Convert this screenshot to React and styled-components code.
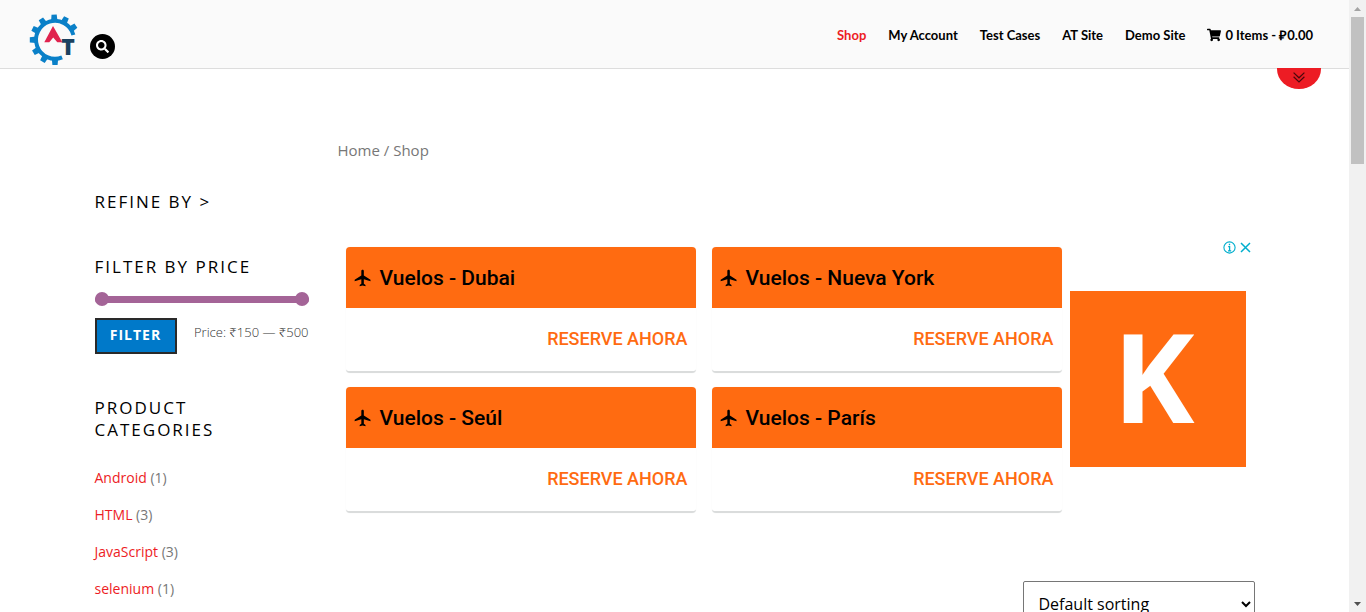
import React from "react";
import styled, { createGlobalStyle } from "styled-components";
import { FaSearch, FaShoppingCart } from "react-icons/fa";
import { MdFlight } from "react-icons/md";

const GlobalStyle = createGlobalStyle`
  *, *::before, *::after { box-sizing: border-box; }
  body {
    margin: 0;
    background: #fff;
    color: #777;
    font-family: "Open Sans", "Noto Sans", sans-serif;
    font-size: 14px;
    line-height: 22px;
  }
  a { color: inherit; text-decoration: none; }
`;

const Shell = styled.div`
  display: flex;
  height: 100vh;
  overflow: hidden;
`;

const Page = styled.div`
  flex: 1;
  min-width: 0;
  overflow: hidden;
`;

const Header = styled.header`
  position: relative;
  display: flex;
  justify-content: space-between;
  padding: 0 36px 0 29px;
  height: 69px;
  background: #fafafa;
  border-bottom: 1px solid #ddd;
`;

const Brand = styled.div`
  display: flex;
  align-items: flex-start;
  gap: 11px;
  padding-top: 14px;
`;

const LogoLink = styled.a`
  display: block;
  height: 52px;
`;

const SearchButton = styled.button`
  display: flex;
  align-items: center;
  justify-content: center;
  width: 25px;
  height: 25px;
  margin-top: 20px;
  padding: 0;
  border: 0;
  border-radius: 50%;
  background: #000;
  color: #fff;
  font-size: 13px;
`;

const Nav = styled.nav`
  display: flex;
  gap: 22px;
  padding-top: 24px;
  font-family: Lato, "Open Sans", sans-serif;
  font-size: 13px;
  font-weight: 700;
`;

const NavLink = styled.a`
  display: flex;
  align-items: center;
  gap: 4px;
  height: 22px;
  white-space: nowrap;
  color: ${(p) => (p.$active ? "#ed1c24" : "#000")};
`;

const HeaderTab = styled.button`
  position: absolute;
  top: 68px;
  right: 28px;
  display: flex;
  justify-content: center;
  width: 44px;
  height: 21px;
  padding: 4px 0 0;
  border: 0;
  border-radius: 0 0 22px 22px / 0 0 20px 20px;
  background: #ed1c24;
`;

const Container = styled.div`
  display: flex;
  gap: 29px;
  max-width: 1160px;
  margin: 0 auto;
`;

const Sidebar = styled.aside`
  width: 214px;
  flex: none;
  padding-top: 122px;
`;

const Heading = styled.h2`
  margin: 0 0 ${(p) => p.$gap}px;
  max-width: 180px;
  color: #000;
  font-size: 17px;
  font-weight: 500;
  line-height: 22px;
  letter-spacing: 2px;
  text-transform: uppercase;
`;

const PriceRange = styled.div`
  position: relative;
  height: 14px;
  display: flex;
  align-items: center;
  margin-bottom: 12px;

  &::before {
    content: "";
    width: 100%;
    height: 7px;
    border-radius: 7px;
    background: #a46497;
  }
`;

const RangeInput = styled.input`
  position: absolute;
  inset: 0;
  width: 100%;
  height: 14px;
  margin: 0;
  appearance: none;
  background: transparent;
  pointer-events: none;

  &::-webkit-slider-thumb {
    appearance: none;
    width: 14px;
    height: 14px;
    border: 0;
    border-radius: 50%;
    background: #a46497;
    pointer-events: auto;
  }
`;

const FilterRow = styled.div`
  display: flex;
  justify-content: space-between;
  margin-bottom: 43px;
  font-size: 13px;
`;

const FilterButton = styled.button`
  width: 82px;
  height: 36px;
  padding: 0 0 2px;
  border: 2px solid #2a2a2a;
  background: #0079c9;
  color: #fff;
  font: 700 14px/30px "Open Sans", sans-serif;
  letter-spacing: 1px;
`;

const PriceText = styled.span`
  color: #333;
  font-weight: 300;
  line-height: 28px;
`;

const Categories = styled.ul`
  display: grid;
  gap: 13px;
  margin: 0;
  padding: 0;
  list-style: none;
  line-height: 24px;

  a { color: #ed1c24; }
`;

const Main = styled.main`
  flex: 1;
  min-width: 0;
  padding-top: 69px;
`;

const Breadcrumb = styled.nav`
  margin-bottom: 77px;
  font-size: 15px;
  line-height: 24px;
`;

const Ad = styled.section`
  position: relative;
  display: flex;
  align-items: flex-start;
  gap: 8px;
  padding: 8px 9px 8px 8px;
  font-family: Roboto, sans-serif;
`;

const Offers = styled.div`
  flex: 1;
  display: grid;
  grid-template-columns: 1fr 1fr;
  gap: 14px 16px;
`;

const Offer = styled.a`
  display: block;
  overflow: hidden;
  border-radius: 4px;
  border-bottom: 2px solid #dadcdc;
  box-shadow: 0 0 1px rgba(0, 0, 0, 0.1);
`;

const OfferTitle = styled.span`
  display: flex;
  align-items: center;
  gap: 7px;
  height: 61px;
  padding: 0 7px;
  background: #ff6b11;
  color: #000;
  font-size: 21px;
  font-weight: 500;
`;

const OfferAction = styled.span`
  display: block;
  height: 63px;
  padding: 0 8px;
  color: #ff6b11;
  font-size: 18px;
  font-weight: 500;
  line-height: 62px;
  text-align: right;
`;

const AdLogo = styled.a`
  display: flex;
  align-items: center;
  justify-content: center;
  width: 176px;
  height: 176px;
  margin-top: 44px;
  padding: 0 8px 6px 0;
  background: #ff6b11;
  color: #fff;
  font: 700 123px/160px "Open Sans", sans-serif;
`;

const AdChoices = styled.div`
  position: absolute;
  top: 2px;
  right: 3px;
  display: flex;
  gap: 3px;

  button {
    display: block;
    height: 13px;
    padding: 0;
    border: 0;
    background: none;
  }
`;

const SortRow = styled.form`
  display: flex;
  justify-content: flex-end;
  margin-top: 60px;
`;

const SortSelect = styled.select`
  width: 232px;
  height: 46px;
  padding: 0 11px;
  border: 1px solid #767676;
  border-radius: 2px;
  background: #fff;
  color: #000;
  font: 400 16px "Open Sans", sans-serif;
`;

const Scrollbar = styled.div`
  display: flex;
  flex-direction: column;
  align-items: center;
  justify-content: space-between;
  width: 17px;
  flex: none;
  background: #f1f1f1;
`;

const ScrollUpper = styled.div`
  display: flex;
  flex-direction: column;
`;

const ScrollArrow = styled.svg`
  display: block;
  width: 13px;
  height: 17px;
  fill: ${(p) => (p.$enabled ? "#505050" : "#a3a3a3")};
`;

const ScrollThumb = styled.div`
  width: 13px;
  height: 147px;
  background: #c1c1c1;
`;

const teeth = [-2, 27, 56, -34, -63, -90, -121, -150, 180];

function Logo() {
  return (
    <svg width="50" height="52" viewBox="29 14 50 52" role="img" aria-label="Automation Testing">
      <path
        d="M62.1 57.4 A19 19 0 1 1 73.4 34.9"
        fill="none"
        stroke="#0a80c8"
        strokeWidth="4"
      />
      {teeth.map((angle) => (
        <path
          key={angle}
          d="M51.8 21 L52.4 14.6 H57.6 L58.2 21 Z"
          fill="#0a80c8"
          transform={`rotate(${angle} 55 39.8)`}
        />
      ))}
      <path d="M53 26 L62.3 42.3 H57.3 L53.2 37.5 L49.3 42.3 H44.3 Z" fill="#e0234e" />
      <text
        x="68"
        y="55"
        textAnchor="middle"
        fill="#1c4260"
        fontFamily="Open Sans, sans-serif"
        fontWeight="800"
        fontSize="23"
      >
        T
      </text>
    </svg>
  );
}

const navItems = ["Shop", "My Account", "Test Cases", "AT Site", "Demo Site"];
const offers = ["Dubai", "Nueva York", "Seúl", "París"];
const categories = [
  ["Android", 1],
  ["HTML", 3],
  ["JavaScript", 3],
  ["selenium", 1],
];

export default function App() {
  return (
    <Shell>
      <GlobalStyle />
      <Page>
        <Header>
          <Brand>
            <LogoLink href="#home"><Logo /></LogoLink>
            <SearchButton type="button" aria-label="Search"><FaSearch /></SearchButton>
          </Brand>
          <Nav>
            {navItems.map((item) => (
              <NavLink key={item} href="#" $active={item === "Shop"}>{item}</NavLink>
            ))}
            <NavLink href="#cart"><FaShoppingCart size={14} />0 Items - ₽0.00</NavLink>
          </Nav>
          <HeaderTab type="button" aria-label="Expand header">
            <svg width="12" height="11" viewBox="0 0 12 11" fill="none" stroke="#4a090c" strokeWidth="1.2">
              <path d="M0.6 0.6 L6 5.8 L11.4 0.6 M0.6 4.8 L6 10 L11.4 4.8" />
            </svg>
          </HeaderTab>
        </Header>

        <Container>
          <Sidebar>
            <Heading $gap={43}>Refine by &gt;</Heading>
            <Heading $gap={14}>Filter by price</Heading>
            <PriceRange>
              <RangeInput type="range" min="150" max="500" defaultValue="150" aria-label="Minimum price" />
              <RangeInput type="range" min="150" max="500" defaultValue="500" aria-label="Maximum price" />
            </PriceRange>
            <FilterRow>
              <FilterButton type="button">FILTER</FilterButton>
              <PriceText>Price: ₹150 — ₹500</PriceText>
            </FilterRow>
            <Heading $gap={25}>Product Categories</Heading>
            <Categories>
              {categories.map(([name, count]) => (
                <li key={name}><a href="#">{name}</a> ({count})</li>
              ))}
            </Categories>
          </Sidebar>

          <Main>
            <Breadcrumb aria-label="Breadcrumb"><a href="#home">Home</a> / Shop</Breadcrumb>
            <Ad>
              <Offers>
                {offers.map((city) => (
                  <Offer key={city} href="#">
                    <OfferTitle><MdFlight size={20} />Vuelos - {city}</OfferTitle>
                    <OfferAction>RESERVE AHORA</OfferAction>
                  </Offer>
                ))}
              </Offers>
              <AdLogo href="#">K</AdLogo>
              <AdChoices>
                <button type="button" aria-label="Ad information">
                  <svg width="13" height="13" viewBox="0 0 13 13" fill="none" stroke="#00aecd">
                    <circle cx="6.5" cy="6.5" r="5.6" strokeWidth="1.1" />
                    <path d="M6.5 2.8 V4.3 M5.2 5.6 H6.6 V9.8 M5 9.8 H8.2" strokeWidth="1.3" />
                  </svg>
                </button>
                <button type="button" aria-label="Close ad">
                  <svg width="13" height="13" viewBox="0 0 13 13" stroke="#00aecd" strokeWidth="1.5">
                    <path d="M2 2 L11 11 M11 2 L2 11" />
                  </svg>
                </button>
              </AdChoices>
            </Ad>
            <SortRow>
              <SortSelect aria-label="Shop order" defaultValue="default">
                <option value="default">Default sorting</option>
                <option value="popularity">Sort by popularity</option>
              </SortSelect>
            </SortRow>
          </Main>
        </Container>
      </Page>
      <Scrollbar aria-hidden="true">
        <ScrollUpper>
          <ScrollArrow viewBox="0 0 13 17"><path d="M3 11 L6.5 7 L10 11 Z" /></ScrollArrow>
          <ScrollThumb />
        </ScrollUpper>
        <ScrollArrow $enabled viewBox="0 0 13 17"><path d="M3 7 L6.5 11 L10 7 Z" /></ScrollArrow>
      </Scrollbar>
    </Shell>
  );
}
